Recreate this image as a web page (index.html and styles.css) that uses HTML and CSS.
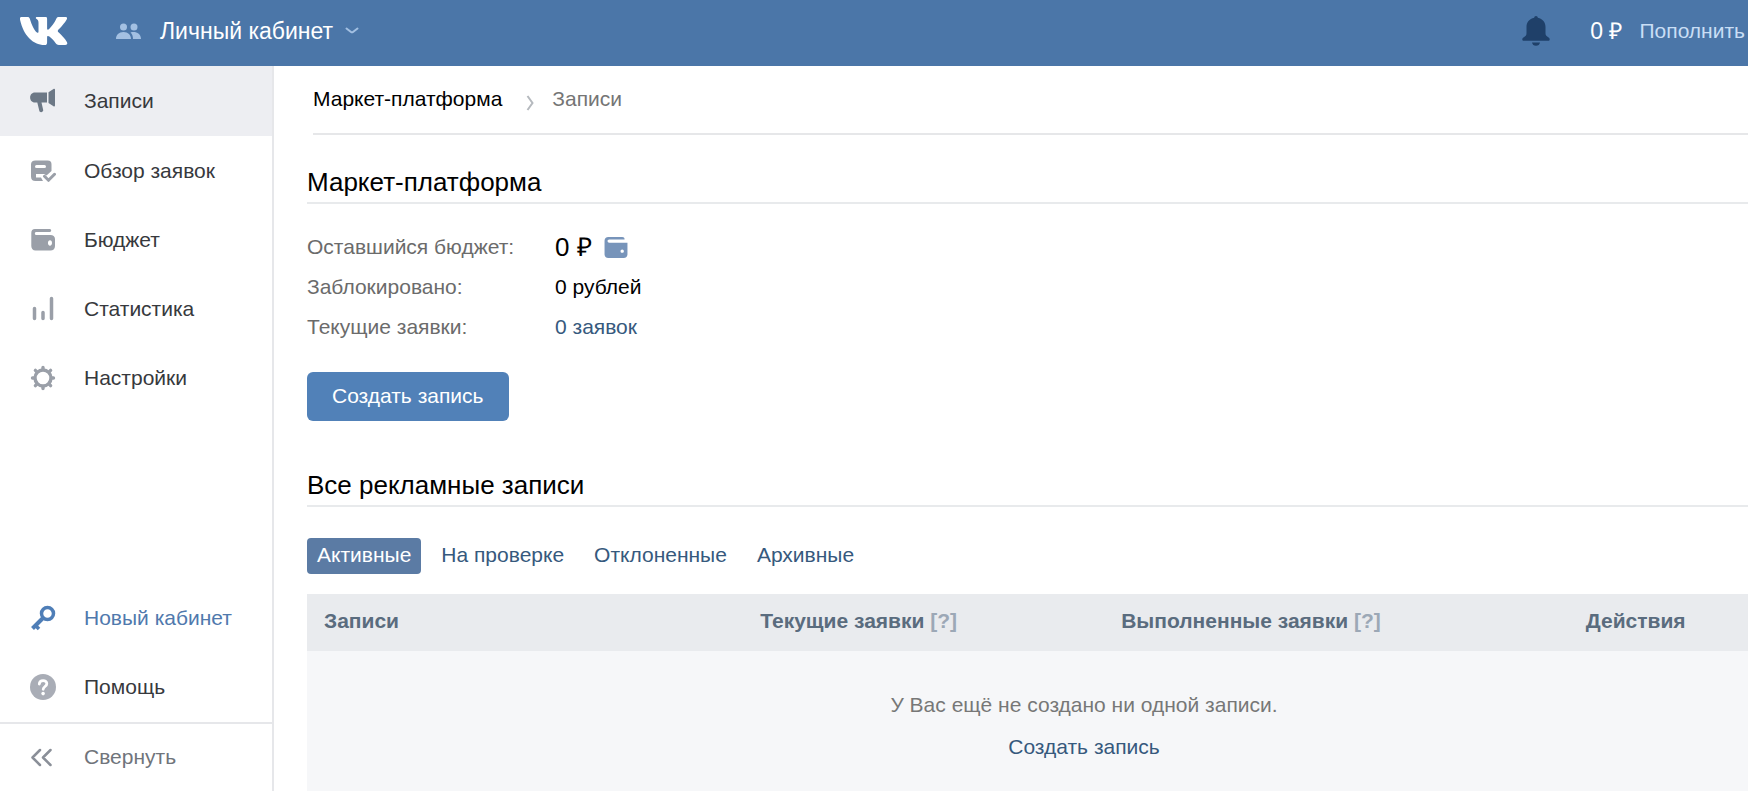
FILE: index.html
```html
<!DOCTYPE html>
<html lang="ru">
<head>
<meta charset="utf-8">
<title>Маркет-платформа</title>
<link rel="stylesheet" href="styles.css">
</head>
<body>
<header class="header">
  <a class="logo" href="#" aria-label="VK">
    <svg width="48" height="28" viewBox="0 0 48 28" fill="#fff"><path d="M1.500 0H7.500c1.300 0 1.900.5 2.400 1.900C11.500 7.500 14.500 13.500 17 15.500c.9.700 1.500.3 1.500-1V6c0-2.500-.7-3.300-2.200-4.200C15.500 1.200 15.700 0 17 0h8.500c1.200 0 1.600.6 1.600 1.900v9.600c0 1.300.9 1.500 1.800.7C31.500 9.700 34.700 5.200 36.200 1.900 36.800.5 37.500 0 38.700 0h6.500c1.800 0 2.300.9 1.500 2.400C45 5.700 40.500 10.500 38.500 12.600c-1 1.100-.9 1.700 0 2.700 2.500 2.400 6.500 6.200 8.400 9.600.9 1.700.2 3.100-1.700 3.100h-6.400c-1.400 0-2.200-.5-3.100-1.700-1.900-2.500-4-5-6.300-6.700-1.400-1-2.300-.7-2.300.8v4.800c0 2-.7 2.800-2.700 2.800C13 28 3.500 18.500.1 3 -.2 1 .1 0 1.500 0z"/></svg>
  </a>
  <button class="account" type="button">
    <svg class="account-icon" width="26" height="17" viewBox="0 0 26 17" fill="#a3c0e2"><circle cx="7.500" cy="4" r="3.500"/><circle cx="18" cy="4" r="3.500"/><path d="M0 16c0-4 2.800-7 7.500-7s7.500 3 7.500 7zM14.500 9.500C19.500 7.900 25 10.500 25 16h-8c0-3-.8-5-2.500-6.500z"/></svg>
    <span>Личный кабинет</span>
    <svg width="14" height="8" viewBox="0 0 14 8" fill="none" stroke="#a3c0e2" stroke-width="2" stroke-linecap="round" stroke-linejoin="round"><path d="M1.500 1.500L6 5q1 .7 2 0l4.500-3.500"/></svg>
  </button>
  <button class="bell" type="button" aria-label="Уведомления">
    <svg width="28" height="30" viewBox="0 0 28 30" fill="#1f4069"><path d="M14 0c1 0 1.700.7 1.800 1.800C20.700 2.800 23.500 6.500 23.500 11v6c0 2.300.7 3 2.700 4.200 1.200.8 1.500 1.300 1.500 2.300 0 .8-.6 1.300-1.500 1.300H1.800C.9 24.800.3 24.300.3 23.500c0-1 .3-1.500 1.500-2.300 2-1.200 2.700-1.900 2.700-4.200v-6c0-4.500 2.800-8.200 7.700-9.200C12.300.7 13 0 14 0zM10 26.500h8c-.3 2-1.800 3.300-4 3.300s-3.700-1.300-4-3.300z"/></svg>
  </button>
  <span class="balance">0 ₽</span>
  <a class="topup" href="#">Пополнить</a>
</header>
<div class="layout">
  <nav class="sidebar">
    <a class="item active" href="#">
      <svg class="icon" viewBox="0 0 26 26" fill="#6c7886"><path d="M5 4.500h12v10h-5.500l1.700 7.500c.4 2.300-3.300 3.200-3.900.8L7.300 14.500H5c-6.500 0-6.500-10 0-10zM18.500 4.300l5-3.400c.8-.5 1.500-.1 1.500.7v16c0 .9-.8 1.200-1.500.7l-5-3.300z"/></svg>
      <span>Записи</span></a>
    <a class="item" href="#">
      <svg class="icon" viewBox="0 0 26 26" fill="none" stroke="#9a9fa8"><path d="M5.500 2.500h12c3 0 4 1.300 4 4V13l-5 4.500L14 16H6v3.500h5l2 3.500H5.500c-3 0-4.500-1.500-4.500-4.500v-12c0-2.700 1.500-4 4.500-4z" fill="#9a9fa8" stroke="none"/><path d="M6.500 8.500h8" stroke="#fff" stroke-width="3" stroke-linecap="round"/><path d="M14.500 18.300l4 4 6-6" stroke-width="3" stroke-linecap="round" stroke-linejoin="round"/></svg>
      <span>Обзор заявок</span></a>
    <a class="item" href="#">
      <svg class="icon" viewBox="0 0 26 26" fill="#9a9fa8"><path fill-rule="evenodd" d="M5 2h14.500c1 0 1.700.6 1.700 1.500S20.500 5 19.500 5H6C4.500 5 4.500 8 6 8h14.500C23 8 25 9.500 25 12v7c0 3-2 4.500-4.500 4.500h-15C3 23.500 1.300 21.500 1.300 19V6C1.300 3.500 2.500 2 5 2zm15 11.300c-2.700 0-2.700 5.400 0 5.400s2.700-5.400 0-5.400z"/></svg>
      <span>Бюджет</span></a>
    <a class="item" href="#">
      <svg class="icon" viewBox="0 0 26 26" fill="none" stroke="#9a9fa8" stroke-width="3.500" stroke-linecap="round"><path d="M4.500 12.500v10M13 16.500v6M21.500 2.500v20"/></svg>
      <span>Статистика</span></a>
    <a class="item" href="#">
      <svg class="icon" viewBox="0 0 26 26" fill="none" stroke="#9a9fa8"><circle cx="13" cy="13" r="8" stroke-width="3.400"/><path d="M13 4V2.500M13 22v1.500M4 13H2.500M22 13h1.500M6.600 6.600L5.400 5.400M19.400 19.400l1.200 1.200M6.600 19.400l-1.200 1.200M19.400 6.600l1.200-1.200" stroke-width="3.400" stroke-linecap="round"/></svg>
      <span>Настройки</span></a>
    <a class="item lower new push" href="#">
      <svg class="icon" viewBox="0 0 26 26" fill="none" stroke="#4f7eb7"><circle cx="17.500" cy="8.500" r="6" stroke-width="3.500"/><path d="M13 13L2.500 23.500" stroke-width="4"/><path d="M4.500 19.500l4.500 4.500" stroke-width="3.500"/></svg>
      <span>Новый кабинет</span></a>
    <a class="item lower" href="#">
      <svg class="icon" viewBox="0 0 26 26" fill="none"><circle cx="13" cy="13" r="13" fill="#a9adb6"/><path d="M9.300 10c.2-4.600 7.600-4.500 7.500-.3 0 2.800-3.600 2.800-3.600 5.600" stroke="#fff" stroke-width="2.800" stroke-linecap="round"/><circle cx="13.100" cy="19.600" r="1.800" fill="#fff"/></svg>
      <span>Помощь</span></a>
    <button class="item lower collapse" type="button">
      <svg class="icon" viewBox="0 0 26 26" fill="none" stroke="#8a8f98" stroke-width="2.500" stroke-linecap="round" stroke-linejoin="round"><path d="M10 6l-7.500 7.500L10 21M20.500 6L13 13.500l7.500 7.500"/></svg>
      <span>Свернуть</span></button>
  </nav>
  <main class="main">
    <div class="content">
      <nav class="crumbs">
        <a href="#">Маркет-платформа</a>
        <svg width="9" height="16" viewBox="0 0 9 16" fill="none" stroke="#b5b9be" stroke-width="2"><path d="M1.500 1l5 7-5 7"/></svg>
        <span>Записи</span>
      </nav>
      <h1 class="title">Маркет-платформа</h1>
      <dl class="stats">
        <dt>Оставшийся бюджет:</dt>
        <dd class="budget">0 ₽
          <svg width="24" height="21" viewBox="1 2 24 22" fill="#7794ba"><path fill-rule="evenodd" d="M5 2h14.500c1.600 0 2.500.8 2.500 2.500H6c-2.500 0-2.500 3.500 0 3.500h19v12c0 2.500-1.500 4-4 4H5c-2.500 0-4-1.500-4-4V6c0-2.500 1.500-4 4-4zm14.500 13c-2.300 0-2.300 3.600 0 3.600s2.300-3.600 0-3.600z"/></svg></dd>
        <dt>Заблокировано:</dt><dd>0 рублей</dd>
        <dt>Текущие заявки:</dt><dd><a class="link" href="#">0 заявок</a></dd>
      </dl>
      <button class="create" type="button">Создать запись</button>
      <h2 class="title">Все рекламные записи</h2>
      <div class="tabs">
        <button class="tab current" type="button">Активные</button>
        <button class="tab" type="button">На проверке</button>
        <button class="tab" type="button">Отклоненные</button>
        <button class="tab" type="button">Архивные</button>
      </div>
      <table class="table">
        <colgroup><col class="col-post"><col class="col-current"><col class="col-done"><col class="col-actions"></colgroup>
        <thead>
          <tr><th class="first">Записи</th><th>Текущие заявки <a class="hint" href="#">[?]</a></th><th>Выполненные заявки <a class="hint" href="#">[?]</a></th><th>Действия</th></tr>
        </thead>
        <tbody>
          <tr><td colspan="4"><p class="empty">У Вас ещё не создано ни одной записи.</p><a class="link" href="#">Создать запись</a></td></tr>
        </tbody>
      </table>
    </div>
  </main>
</div>
</body>
</html>
```
FILE: styles.css
```css
* { box-sizing: border-box; }
body {
  margin: 0;
  height: 100vh;
  display: flex;
  flex-direction: column;
  overflow: hidden;
  background: #fff;
  color: #000;
  font: 21px/26px "Liberation Sans", Arial, sans-serif;
}
a { color: inherit; text-decoration: none; }
button { border: 0; margin: 0; padding: 0; background: none; color: inherit; font: inherit; cursor: pointer; }
svg { display: block; flex: none; }

.header {
  flex: none;
  height: 66px;
  padding: 0 3px 4px 20px;
  display: flex;
  align-items: center;
  background: #4b76a8;
  color: #fff;
}
.account { display: flex; align-items: center; gap: 12px; margin-left: 48px; font-size: 23px; }
.account-icon { margin-right: 6px; }
.bell { margin-left: auto; }
.balance { margin: 0 17px 0 40px; font-size: 23px; }
.topup { color: #c9def5; }

.layout { flex: 1; min-height: 0; display: flex; }
.sidebar {
  flex: none;
  width: 274px;
  display: flex;
  flex-direction: column;
  border-right: 2px solid #e6e7ea;
  color: #37393d;
}
.item {
  flex: none;
  height: 69px;
  padding-left: 30px;
  display: flex;
  align-items: center;
  gap: 28px;
  text-align: left;
}
.item.active { height: 70px; background: #edeef2; }
.item.lower { padding-bottom: 2px; }
.icon { width: 26px; height: 26px; }
.push { margin-top: auto; }
.new { color: #5079ad; }
.collapse { border-top: 2px solid #e6e7ea; color: #70747b; }

.main { flex: 1; min-width: 0; overflow: hidden; padding: 20px 0 0 33px; }
.content { min-width: 1554px; }
.crumbs {
  display: flex;
  align-items: center;
  margin-left: 6px;
  padding-bottom: 21px;
  border-bottom: 2px solid #e6e7e9;
}
.crumbs svg { margin: 7px 17px 0 24px; }
.crumbs span { color: #757575; }
.title {
  margin: 0;
  padding: 31px 0 4px;
  border-bottom: 2px solid #e8eaec;
  font-size: 26px;
  line-height: 32px;
  font-weight: 400;
}
.stats {
  display: grid;
  grid-template-columns: 248px auto;
  grid-auto-rows: 40px;
  align-items: center;
  margin: 23px 0 25px;
}
.stats dt { color: #6b6b6b; }
.stats dd { margin: 0; }
.stats .budget { display: flex; align-items: center; gap: 12px; font-size: 26px; }
.link { color: #36597d; }
.create {
  display: block;
  padding: 11px 25px 12px;
  border-radius: 6px;
  background: #5181b8;
  color: #fff;
}
h2.title { margin-top: 17px; }
.tabs { display: flex; gap: 10px; margin: 31px 0 20px; }
.tab { padding: 4px 10px 6px; border-radius: 4px; color: #36597d; }
.tab.current { background: #5b7ba4; color: #fff; }

.table { width: 100%; table-layout: fixed; border-collapse: collapse; background: #f6f7f9; }
.table th { padding: 14px 0 17px; background: #e9ebee; color: #5a6c7e; }
.table .first { padding-left: 17px; text-align: left; }
.col-post { width: 20.5%; }
.col-current { width: 30%; }
.col-done { width: 20.5%; }
.col-actions { width: 29%; }
.hint { color: #9ca8b6; }
.table td { padding: 41px 0 60px; text-align: center; }
.empty { margin: 0 0 16px; color: #777; }
```
